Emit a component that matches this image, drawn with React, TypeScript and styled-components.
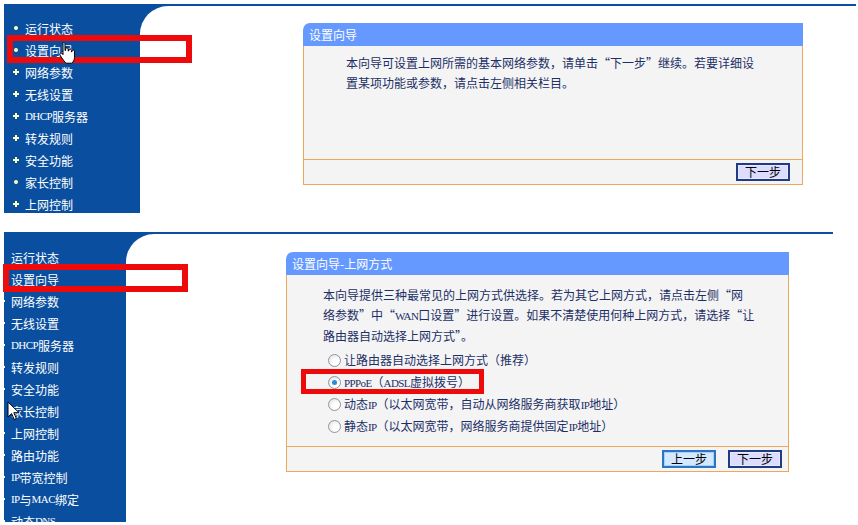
import styled, { createGlobalStyle } from "styled-components";

const BLUE = "#0a4f9f";
const ORANGE = "#eea85c";
const INK = "#1c2f66";

const GlobalStyle = createGlobalStyle`
  html, body {
    margin: 0;
    background: #ffffff;
    font-family: "Noto Sans CJK SC", "Noto Sans", sans-serif;
  }
`;

const Page = styled.div`
  position: relative;
  width: 858px;
  height: 525px;
  overflow: hidden;
  padding: 4px 0 0 4px;
  box-sizing: border-box;
  display: flex;
  flex-direction: column;
  gap: 19px;
`;

const Screen = styled.div<{ $height: number }>`
  display: flex;
  height: ${({ $height }) => $height}px;
`;

const Sidebar = styled.nav<{ $width: number; $padTop: number }>`
  width: ${({ $width }) => $width}px;
  flex-shrink: 0;
  background: ${BLUE};
  overflow: hidden;
  padding-top: ${({ $padTop }) => $padTop}px;
  box-sizing: border-box;
`;

const MenuItem = styled.div<{ $indent: number }>`
  display: flex;
  align-items: center;
  height: 22px;
  padding-left: ${({ $indent }) => $indent}px;
  margin-left: ${({ $indent }) => ($indent < 0 ? $indent : 0)}px;
  color: #ffffff;
  font-size: 12px;
  white-space: nowrap;
`;

const Bullet = styled.span<{ $kind: "dot" | "plus" }>`
  position: relative;
  width: 6px;
  height: 6px;
  margin-right: 6px;
  flex-shrink: 0;

  &::before,
  &::after {
    content: "";
    position: absolute;
    background: #ffffc0;
  }

  &::before {
    ${({ $kind }) =>
      $kind === "dot"
        ? "left: 1px; top: 1px; width: 4px; height: 4px; border-radius: 50%;"
        : "left: 0; top: 2px; width: 6px; height: 2px;"}
  }

  &::after {
    ${({ $kind }) =>
      $kind === "dot" ? "display: none;" : "left: 2px; top: 0; width: 2px; height: 6px;"}
  }
`;

const Latin = styled.span`
  font-family: "Liberation Serif", serif;
  font-size: 11px;
  letter-spacing: -0.6px;
`;

const Main = styled.div<{ $width: number; $line: number }>`
  width: ${({ $width }) => $width}px;
  background: ${BLUE};
  padding-top: ${({ $line }) => $line}px;
  display: flex;
  flex-direction: column;
  box-sizing: border-box;
`;

const Canvas = styled.div<{ $padLeft: number; $padTop: number }>`
  flex: 1;
  background: #ffffff;
  border-top-left-radius: 28px;
  padding: ${({ $padTop }) => $padTop}px 0 0 ${({ $padLeft }) => $padLeft}px;
`;

const Panel = styled.section<{ $width: number }>`
  width: ${({ $width }) => $width}px;
`;

const PanelHead = styled.div`
  height: 23px;
  line-height: 23px;
  background: #6699ff;
  color: #ffffff;
  font-size: 12px;
  padding-left: 6px;
  border-top-left-radius: 7px;
`;

const PanelBody = styled.div<{ $height: number; $padTop: number; $padLeft: number }>`
  height: ${({ $height }) => $height}px;
  box-sizing: border-box;
  background: #f4f4f4;
  border-left: 1px solid ${ORANGE};
  border-right: 1px solid ${ORANGE};
  padding: ${({ $padTop }) => $padTop}px 0 0 ${({ $padLeft }) => $padLeft}px;
  color: ${INK};
  font-size: 12px;
  line-height: 20px;
  white-space: nowrap;
`;

const Intro = styled.p`
  margin: 0;
`;

const RadioList = styled.div`
  margin: 3px 0 0 5px;
`;

const RadioRow = styled.label`
  display: flex;
  align-items: center;
  height: 22px;
  gap: 3px;
`;

const Radio = styled.span<{ $checked?: boolean }>`
  position: relative;
  width: 11px;
  height: 11px;
  border-radius: 50%;
  border: 1px solid #8d969f;
  background: radial-gradient(circle at 65% 65%, #ffffff 30%, #dcdcdc 100%);
  flex-shrink: 0;

  &::after {
    content: "";
    display: ${({ $checked }) => ($checked ? "block" : "none")};
    position: absolute;
    left: 3px;
    top: 3px;
    width: 5px;
    height: 5px;
    border-radius: 50%;
    background: #2a8ad8;
  }
`;

const PanelFoot = styled.div<{ $padRight: number }>`
  height: 26px;
  box-sizing: border-box;
  background: #f4f4f4;
  border: 1px solid ${ORANGE};
  display: flex;
  justify-content: flex-end;
  align-items: center;
  gap: 12px;
  padding-right: ${({ $padRight }) => $padRight}px;
`;

const Button = styled.button<{ $focused?: boolean }>`
  width: 54px;
  height: 18px;
  padding: 0;
  box-sizing: border-box;
  font-family: "Noto Sans CJK SC", sans-serif;
  font-size: 12px;
  line-height: 14px;
  color: #000000;
  background: ${({ $focused }) => ($focused ? "#d4e8ff" : "#dcdcff")};
  border: 2px solid ${({ $focused }) => ($focused ? "#2f73c4" : "#203b86")};
  box-shadow: inset 0 0 0 1px ${({ $focused }) => ($focused ? "#9fd2ff" : "#e8e8ff")};
`;

const Mark = styled.div<{ $x: number; $y: number; $w: number; $h: number; $t: number }>`
  position: absolute;
  left: ${({ $x }) => $x}px;
  top: ${({ $y }) => $y}px;
  width: ${({ $w }) => $w}px;
  height: ${({ $h }) => $h}px;
  box-sizing: border-box;
  border: ${({ $t }) => $t}px solid #ee0a0a;
  pointer-events: none;
`;

const Pointer = styled.svg<{ $x: number; $y: number }>`
  position: absolute;
  left: ${({ $x }) => $x}px;
  top: ${({ $y }) => $y}px;
`;

type Entry = { label: React.ReactNode; kind: "dot" | "plus" };

const topMenu: Entry[] = [
  { label: "运行状态", kind: "dot" },
  { label: "设置向导", kind: "dot" },
  { label: "网络参数", kind: "plus" },
  { label: "无线设置", kind: "plus" },
  { label: <><Latin>DHCP</Latin>服务器</>, kind: "plus" },
  { label: "转发规则", kind: "plus" },
  { label: "安全功能", kind: "plus" },
  { label: "家长控制", kind: "dot" },
  { label: "上网控制", kind: "plus" },
];

const bottomMenu: Entry[] = [
  ...topMenu,
  { label: "路由功能", kind: "plus" },
  { label: <><Latin>IP</Latin>带宽控制</>, kind: "plus" },
  { label: <><Latin>IP</Latin>与<Latin>MAC</Latin>绑定</>, kind: "plus" },
  { label: <>动态<Latin>DNS</Latin></>, kind: "plus" },
];

const Menu = ({ items, indent }: { items: Entry[]; indent: number }) => (
  <>
    {items.map((item, i) => (
      <MenuItem key={i} $indent={indent}>
        <Bullet $kind={item.kind} />
        {item.label}
      </MenuItem>
    ))}
  </>
);

const App = () => {
  return (
    <>
      <GlobalStyle />
      <Page>
        <Screen $height={209}>
          <Sidebar $width={136} $padTop={13}>
            <Menu items={topMenu} indent={9} />
          </Sidebar>
          <Main $width={716} $line={2}>
            <Canvas $padLeft={163} $padTop={17}>
              <Panel $width={500}>
                <PanelHead>设置向导</PanelHead>
                <PanelBody $height={113} $padTop={7} $padLeft={42}>
                  <Intro>
                    本向导可设置上网所需的基本网络参数，请单击“下一步”继续。若要详细设
                    <br />
                    置某项功能或参数，请点击左侧相关栏目。
                  </Intro>
                </PanelBody>
                <PanelFoot $padRight={12}>
                  <Button>下一步</Button>
                </PanelFoot>
              </Panel>
            </Canvas>
          </Main>
        </Screen>

        <Screen $height={290}>
          <Sidebar $width={122} $padTop={14}>
            <Menu items={bottomMenu} indent={-5} />
          </Sidebar>
          <Main $width={707} $line={2}>
            <Canvas $padLeft={160} $padTop={18}>
              <Panel $width={503}>
                <PanelHead>设置向导-上网方式</PanelHead>
                <PanelBody $height={171} $padTop={10} $padLeft={36}>
                  <Intro>
                    本向导提供三种最常见的上网方式供选择。若为其它上网方式，请点击左侧“网
                    <br />
                    络参数”中“<Latin>WAN</Latin>口设置”进行设置。如果不清楚使用何种上网方式，请选择“让
                    <br />
                    路由器自动选择上网方式”。
                  </Intro>
                  <RadioList>
                    <RadioRow>
                      <Radio />
                      让路由器自动选择上网方式（推荐）
                    </RadioRow>
                    <RadioRow>
                      <Radio $checked />
                      <span>
                        <Latin>PPPoE</Latin>（<Latin>ADSL</Latin>虚拟拨号）
                      </span>
                    </RadioRow>
                    <RadioRow>
                      <Radio />
                      <span>
                        动态<Latin>IP</Latin>（以太网宽带，自动从网络服务商获取<Latin>IP</Latin>地址）
                      </span>
                    </RadioRow>
                    <RadioRow>
                      <Radio />
                      <span>
                        静态<Latin>IP</Latin>（以太网宽带，网络服务商提供固定<Latin>IP</Latin>地址）
                      </span>
                    </RadioRow>
                  </RadioList>
                </PanelBody>
                <PanelFoot $padRight={6}>
                  <Button $focused>上一步</Button>
                  <Button>下一步</Button>
                </PanelFoot>
              </Panel>
            </Canvas>
          </Main>
        </Screen>

        <Mark $x={7} $y={35} $w={185} $h={28} $t={6} />
        <Mark $x={3} $y={264} $w={185} $h={28} $t={6} />
        <Mark $x={301} $y={369} $w={183} $h={25} $t={5} />

        <Pointer $x={58} $y={41} width="18" height="24" viewBox="0 0 18 24">
          <path
            d="M5.5 1.5c.9 0 1.5.6 1.5 1.4v6.6h.6V8c0-.8.6-1.3 1.300-1.3s1.3.5 1.3 1.3v2h.6V9.2c0-.8.6-1.3 1.3-1.3s1.3.5 1.3 1.3v1.6h.6v-.6c0-.8.5-1.2 1.2-1.2s1.3.4 1.3 1.2v6.4c0 2.5-1.3 4.3-2.6 5.6H7.8C6.4 20.6 4.6 18 3.2 16 2.2 14.6 1.2 13.2 2 12.4c.9-.8 2 0 3 1.2V2.9c0-.8-.4-1.4.5-1.4z"
            fill="#ffffff"
            stroke="#000000"
            strokeWidth="1"
          />
        </Pointer>
        <Pointer $x={7} $y={401} width="13" height="20" viewBox="0 0 13 20">
          <path d="M1 1v15l3.6-3.4 2.6 5.9 2.2-1-2.6-5.8H12z" fill="#ffffff" stroke="#000000" strokeWidth="1" />
        </Pointer>
      </Page>
    </>
  );
};

export default App;
